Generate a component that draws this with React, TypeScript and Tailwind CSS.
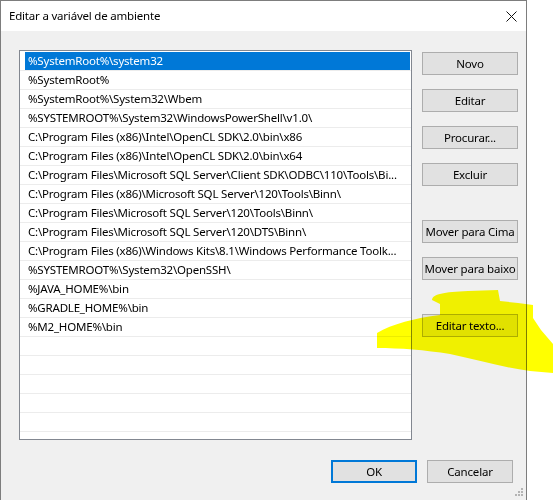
import React from "react";

const paths = [
  "%SystemRoot%\\system32",
  "%SystemRoot%",
  "%SystemRoot%\\System32\\Wbem",
  "%SYSTEMROOT%\\System32\\WindowsPowerShell\\v1.0\\",
  "C:\\Program Files (x86)\\Intel\\OpenCL SDK\\2.0\\bin\\x86",
  "C:\\Program Files (x86)\\Intel\\OpenCL SDK\\2.0\\bin\\x64",
  "C:\\Program Files\\Microsoft SQL Server\\Client SDK\\ODBC\\110\\Tools\\Bi...",
  "C:\\Program Files (x86)\\Microsoft SQL Server\\120\\Tools\\Binn\\",
  "C:\\Program Files\\Microsoft SQL Server\\120\\Tools\\Binn\\",
  "C:\\Program Files\\Microsoft SQL Server\\120\\DTS\\Binn\\",
  "C:\\Program Files (x86)\\Windows Kits\\8.1\\Windows Performance Toolk...",
  "%SYSTEMROOT%\\System32\\OpenSSH\\",
  "%JAVA_HOME%\\bin",
  "%GRADLE_HOME%\\bin",
  "%M2_HOME%\\bin",
];

const rows = [...paths, ...Array(6).fill("")];

function Button({ label, primary, className = "" }: { label: string; primary?: boolean; className?: string }) {
  return (
    <button
      className={
        "flex h-[23px] items-center justify-center whitespace-nowrap bg-[#e1e1e1] text-[11.5px] leading-none tracking-[-0.2px] text-black " +
        (primary ? "border-2 border-[#0078d7] " : "border border-[#adadad] ") +
        className
      }
    >
      {label}
    </button>
  );
}

function CloseIcon() {
  return (
    <svg width="11" height="11" viewBox="0 0 11 11">
      <line x1="0.5" y1="0.5" x2="10.5" y2="10.5" stroke="#111" strokeWidth="1" />
      <line x1="10.5" y1="0.5" x2="0.5" y2="10.5" stroke="#111" strokeWidth="1" />
    </svg>
  );
}

function Grip() {
  const dots = [
    [6, 0],
    [3, 3],
    [6, 3],
    [0, 6],
    [3, 6],
    [6, 6],
  ];
  return (
    <svg width="8" height="8" viewBox="0 0 8 8">
      {dots.map(([x, y]) => (
        <rect key={`${x}-${y}`} x={x} y={y} width="2" height="2" fill="#b4b4b4" />
      ))}
    </svg>
  );
}

export default function App() {
  return (
    <div
      className="relative h-[500px] w-[553px] overflow-hidden bg-white"
      style={{ fontFamily: '"Noto Sans", "Segoe UI", sans-serif' }}
    >
      <div className="flex h-[502px] w-[527px] flex-col border border-[#7d7d7d] bg-[#f0f0f0]">
        {/* title bar */}
        <div className="flex h-[30px] shrink-0 items-center justify-between bg-white pl-[8px] pr-[9px]">
          <span className="text-[11.5px] tracking-[-0.2px] text-black">Editar a variável de ambiente</span>
          <CloseIcon />
        </div>

        <div className="flex pl-[18px] pt-[19px]">
          {/* path list */}
          <div className="h-[390px] w-[393px] overflow-hidden border border-[#828790] bg-white pt-[1px]">
            {rows.map((p, i) => (
              <div key={i} className="flex h-[19px] items-stretch border-b border-[#ececec]">
                <div
                  className={
                    "ml-[5px] mr-[1px] flex flex-1 items-center overflow-hidden whitespace-nowrap pl-[3px] text-[11.5px] tracking-[-0.2px] " +
                    (i === 0 ? "bg-[#0078d7] text-white" : "text-black")
                  }
                >
                  {p}
                </div>
              </div>
            ))}
          </div>

          {/* action buttons */}
          <div className="ml-[10px] flex w-[96px] flex-col pt-[2px]">
            <Button label="Novo" />
            <Button label="Editar" className="mt-[14px]" />
            <Button label="Procurar..." className="mt-[14px]" />
            <Button label="Excluir" className="mt-[14px]" />
            <Button label="Mover para Cima" className="mt-[34px]" />
            <Button label="Mover para baixo" className="mt-[14px]" />
            <Button label="Editar texto..." className="mt-[34px]" />
          </div>
        </div>

        <div className="flex justify-end gap-[10px] pr-[13px] pt-[20px]">
          <Button label="OK" primary className="w-[86px]" />
          <Button label="Cancelar" className="w-[86px]" />
        </div>

        <div className="flex justify-end pr-[3px] pt-[5px]">
          <Grip />
        </div>
      </div>

      {/* highlighter stroke */}
      <svg
        className="pointer-events-none absolute left-0 top-0 mix-blend-multiply"
        width="553"
        height="500"
        viewBox="0 0 553 500"
      >
        <path
          d="M432 300 C432 294 444 292 468 291 L498 290 L500 301 L518 303 L533 305 L533 318 L541 330 L553 344 L553 373 L530 371 C505 368 478 360 450 354 C425 350 400 348 377 348 L377 333 C392 324 415 318 440 315 L440 304 Z"
          fill="#ffff00"
        />
      </svg>
    </div>
  );
}
